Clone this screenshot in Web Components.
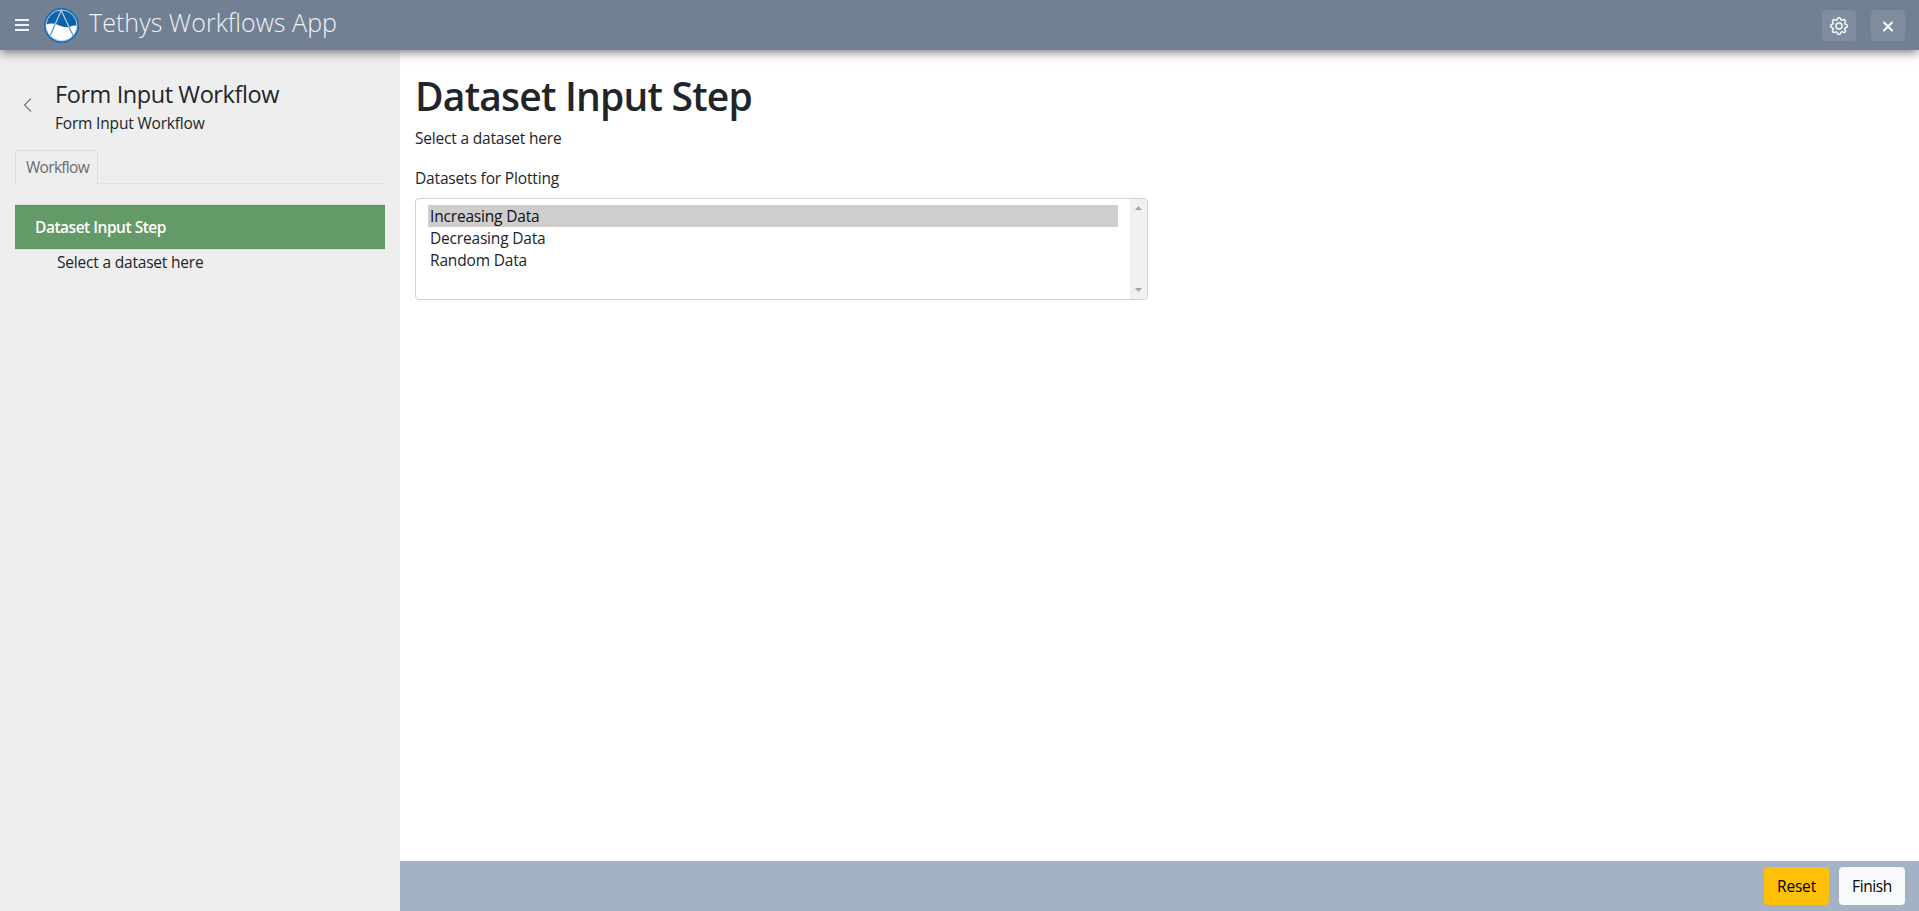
<!DOCTYPE html>
<html lang="en">
<head>
<meta charset="utf-8">
<title>Tethys Workflows App</title>
<style>
html, body { margin: 0; height: 100%; overflow: hidden; }
body { font: 15.5px/24px "Open Sans", "Noto Sans", sans-serif; color: #212529; background: #fff; }
</style>
</head>
<body>
<workflow-app></workflow-app>
<script>
const define = (name, html, ready) => customElements.define(name, class extends HTMLElement {
  constructor() {
    super();
    const t = document.createElement('template');
    t.innerHTML = html;
    this.attachShadow({ mode: 'open' }).append(t.content.cloneNode(true));
  }
  connectedCallback() { if (ready) ready(this); }
});

/* A single line of text tracked to a given width. */
define('text-run', `<style>:host{display:block;white-space:nowrap;width:max-content}span{display:inline-block}</style><span><slot></slot></span>`, el => {
  const span = el.shadowRoot.querySelector('span');
  const fit = () => {
    span.style.letterSpacing = '0';
    const nodes = el.shadowRoot.querySelector('slot').assignedNodes({ flatten: true });
    const n = nodes.filter(x => !x.slot).map(x => x.textContent).join('').trim().length;
    const w = +el.getAttribute('width');
    const natural = span.getBoundingClientRect().width;
    if (w && natural && n) { span.style.letterSpacing = (w - natural) / n + 'px'; }
  };
  requestAnimationFrame(fit);
});

define('app-logo', `<style>:host{display:block;width:35px;height:35px}svg{display:block}</style>
<svg width="35" height="35" viewBox="0 0 36 36">
<circle cx="18" cy="18" r="18" fill="#1a6db4"/>
<circle cx="18" cy="18" r="15.900" fill="#0d62ab" stroke="#c4daed" stroke-width="1"/>
<path d="M2.300 17C6 15.300 10 15.500 14 17.200S23 20.500 27 19.200S32 18 33.700 18.300A15.700 15.700 0 0 1 2.300 17Z" fill="#fff"/>
<path d="M6.500 28L17.700 2.500L29.800 28" fill="none" stroke="#b9d2e8" stroke-width="1.200"/>
<path d="M6.500 28L11.300 17M25.200 19L29.800 28" fill="none" stroke="#5d97cb" stroke-width="1.200"/>
</svg>`);

define('icon-button', `<style>:host{display:block}button{all:unset;box-sizing:border-box;width:34px;height:31px;border-radius:4px;background:rgba(255,255,255,.1);color:#fff;display:flex;align-items:center;justify-content:center}</style><button><slot></slot></button>`);

define('app-header', `<style>
:host{display:flex;align-items:center;box-sizing:border-box;height:50px;background:#718093;color:#f1f2f4;padding:0 14px 0 15px;box-shadow:0 2px 10px rgba(0,0,0,.55);position:relative;z-index:2}
.menu{display:grid;gap:3px;width:14px;margin-right:15px}.menu i{height:2px;background:#f1f2f4}
app-logo{margin-top:1px}
text-run{font-size:25px;line-height:34px;font-weight:300;margin:-6px 0 0 10px}
.actions{display:flex;gap:15px;margin:1px 0 0 auto}svg{display:block}
</style>
<div class="menu"><i></i><i></i><i></i></div><app-logo></app-logo><text-run width="248">Tethys Workflows App</text-run>
<div class="actions">
<icon-button><svg width="18" height="18" viewBox="0 0 16 16" fill="currentColor" stroke="currentColor" stroke-width=".3"><path d="M8 4.754a3.246 3.246 0 1 0 0 6.492 3.246 3.246 0 0 0 0-6.492zM5.754 8a2.246 2.246 0 1 1 4.492 0 2.246 2.246 0 0 1-4.492 0z"/><path d="M9.796 1.343c-.527-1.79-3.065-1.790-3.592 0l-.094.319a.873.873 0 0 1-1.255.520l-.292-.160c-1.640-.892-3.433.902-2.540 2.541l.159.292a.873.873 0 0 1-.520 1.255l-.319.094c-1.790.527-1.790 3.065 0 3.592l.319.094a.873.873 0 0 1 .520 1.255l-.160.292c-.892 1.640.901 3.434 2.541 2.540l.292-.159a.873.873 0 0 1 1.255.520l.094.319c.527 1.790 3.065 1.790 3.592 0l.094-.319a.873.873 0 0 1 1.255-.520l.292.160c1.640.893 3.434-.902 2.540-2.541l-.159-.292a.873.873 0 0 1 .520-1.255l.319-.094c1.790-.527 1.790-3.065 0-3.592l-.319-.094a.873.873 0 0 1-.520-1.255l.160-.292c.893-1.640-.902-3.433-2.541-2.540l-.292.159a.873.873 0 0 1-1.255-.520l-.094-.319zm-2.633.283c.246-.835 1.428-.835 1.674 0l.094.319a1.873 1.873 0 0 0 2.693 1.115l.291-.160c.764-.415 1.600.420 1.184 1.185l-.159.292a1.873 1.873 0 0 0 1.116 2.692l.318.094c.835.246.835 1.428 0 1.674l-.319.094a1.873 1.873 0 0 0-1.115 2.693l.160.291c.415.764-.420 1.600-1.185 1.184l-.291-.159a1.873 1.873 0 0 0-2.693 1.116l-.094.318c-.246.835-1.428.835-1.674 0l-.094-.319a1.873 1.873 0 0 0-2.692-1.115l-.292.160c-.764.415-1.600-.420-1.184-1.185l.159-.291A1.873 1.873 0 0 0 1.945 8.930l-.319-.094c-.835-.246-.835-1.428 0-1.674l.319-.094A1.873 1.873 0 0 0 3.060 4.377l-.160-.292c-.415-.764.420-1.600 1.185-1.184l.292.159a1.873 1.873 0 0 0 2.692-1.115l.094-.319z"/></svg></icon-button>
<icon-button><svg width="20" height="20" viewBox="0 0 20 20" fill="none" stroke="currentColor" stroke-width="1.900" stroke-linecap="round"><path d="M6 6.500L14 14.500M14 6.500L6 14.500"/></svg></icon-button>
</div>`);

define('nav-tabs', `<style>
:host{display:flex;box-sizing:border-box;height:34px;border-bottom:1px solid #dee2e6}
div{box-sizing:border-box;width:83px;height:34px;border:1px solid #dcdddf;border-bottom:0;border-radius:4px 4px 0 0;background:#eee;padding:4px 0 0 10px;color:#6c6c6c}
</style><div><text-run width="63"><slot></slot></text-run></div>`);

define('step-item', `<style>
:host{display:block}.title{box-sizing:border-box;height:46px;background:#649a68;border:solid #dcdfe0;border-width:1px 0;color:#fff;padding:10px 0 0 20px;font-weight:600}
.help{padding:0 0 0 42px}
</style><div class="title"><text-run width="131"><slot></slot></text-run></div><div class="help"><slot name="help"></slot></div>`);

define('workflow-nav', `<style>
:host{display:block;box-sizing:border-box;width:400px;background:#eee;padding:28px 15px 0}
.head{display:flex;height:72px}.back{width:40px;padding:19px 0 0 7px;box-sizing:border-box}svg{display:block}
.title{font-size:23.5px;line-height:32px}.sub{margin-top:1px}
step-item{margin-top:20px}
</style>
<div class="head"><div class="back"><svg width="11" height="16" viewBox="0 0 11 16" fill="none" stroke="#777" stroke-width="1.200"><path d="M9 1.500L2.500 8L9 14.500"/></svg></div>
<div><text-run class="title" width="224">Form Input Workflow</text-run><text-run class="sub" width="149.500">Form Input Workflow</text-run></div></div>
<nav-tabs>Workflow</nav-tabs>
<step-item>Dataset Input Step<text-run slot="help" width="146.500">Select a dataset here</text-run></step-item>`);

define('list-option', `<style>:host{display:block;height:22px;line-height:22px;padding-left:2px}:host([selected]){background:#cecece;color:#101010}</style><slot></slot>`);

define('list-box', `<style>
:host{display:flex;box-sizing:border-box;width:733px;height:102px;border:1px solid #ced4da;border-radius:4px;overflow:hidden}
.options{flex:1;padding:6px 12px}
.bar{width:17px;background:#f0f0f0;display:flex;flex-direction:column;justify-content:space-between;align-items:center;padding:7px 0;box-sizing:border-box}svg{display:block}
</style><div class="options"><slot></slot></div>
<div class="bar"><svg width="7" height="4" fill="#a3a3a3"><path d="M0 4L3.500 0L7 4Z"/></svg><svg width="7" height="4" fill="#a3a3a3"><path d="M0 0L3.500 4L7 0Z"/></svg></div>`);

define('action-button', `<style>:host{display:block}button{all:unset;box-sizing:border-box;display:flex;height:38px;border-radius:4px;background:#f8f9fa;color:#000;padding:7px 13px}:host([kind=warning]) button{background:#ffc107}</style><button><slot></slot></button>`);

define('workflow-step', `<style>
:host{display:flex;flex-direction:column;flex:1}
main{flex:1;padding:0 15px}h1{margin:22px 0 0;font-size:39px;line-height:48px;font-weight:600}
.help{margin-top:6px}.label{margin:16px 0 8px}
footer{box-sizing:border-box;height:50px;background:#a4b2c6;display:flex;justify-content:flex-end;gap:10px;padding:6px 14px}
</style>
<main><h1><text-run width="337">Dataset Input Step</text-run></h1>
<text-run class="help" width="146.500">Select a dataset here</text-run>
<text-run class="label" width="144">Datasets for Plotting</text-run>
<list-box><list-option selected><text-run width="109.500">Increasing Data</text-run></list-option><list-option><text-run width="115.500">Decreasing Data</text-run></list-option><list-option><text-run width="97">Random Data</text-run></list-option></list-box></main>
<footer><action-button kind="warning"><text-run width="39">Reset</text-run></action-button><action-button><text-run width="40">Finish</text-run></action-button></footer>`);

define('workflow-app', `<style>:host{display:flex;flex-direction:column;height:100vh}.body{display:flex;flex:1}</style>
<app-header></app-header><div class="body"><workflow-nav></workflow-nav><workflow-step></workflow-step></div>`);
</script>
</body>
</html>
